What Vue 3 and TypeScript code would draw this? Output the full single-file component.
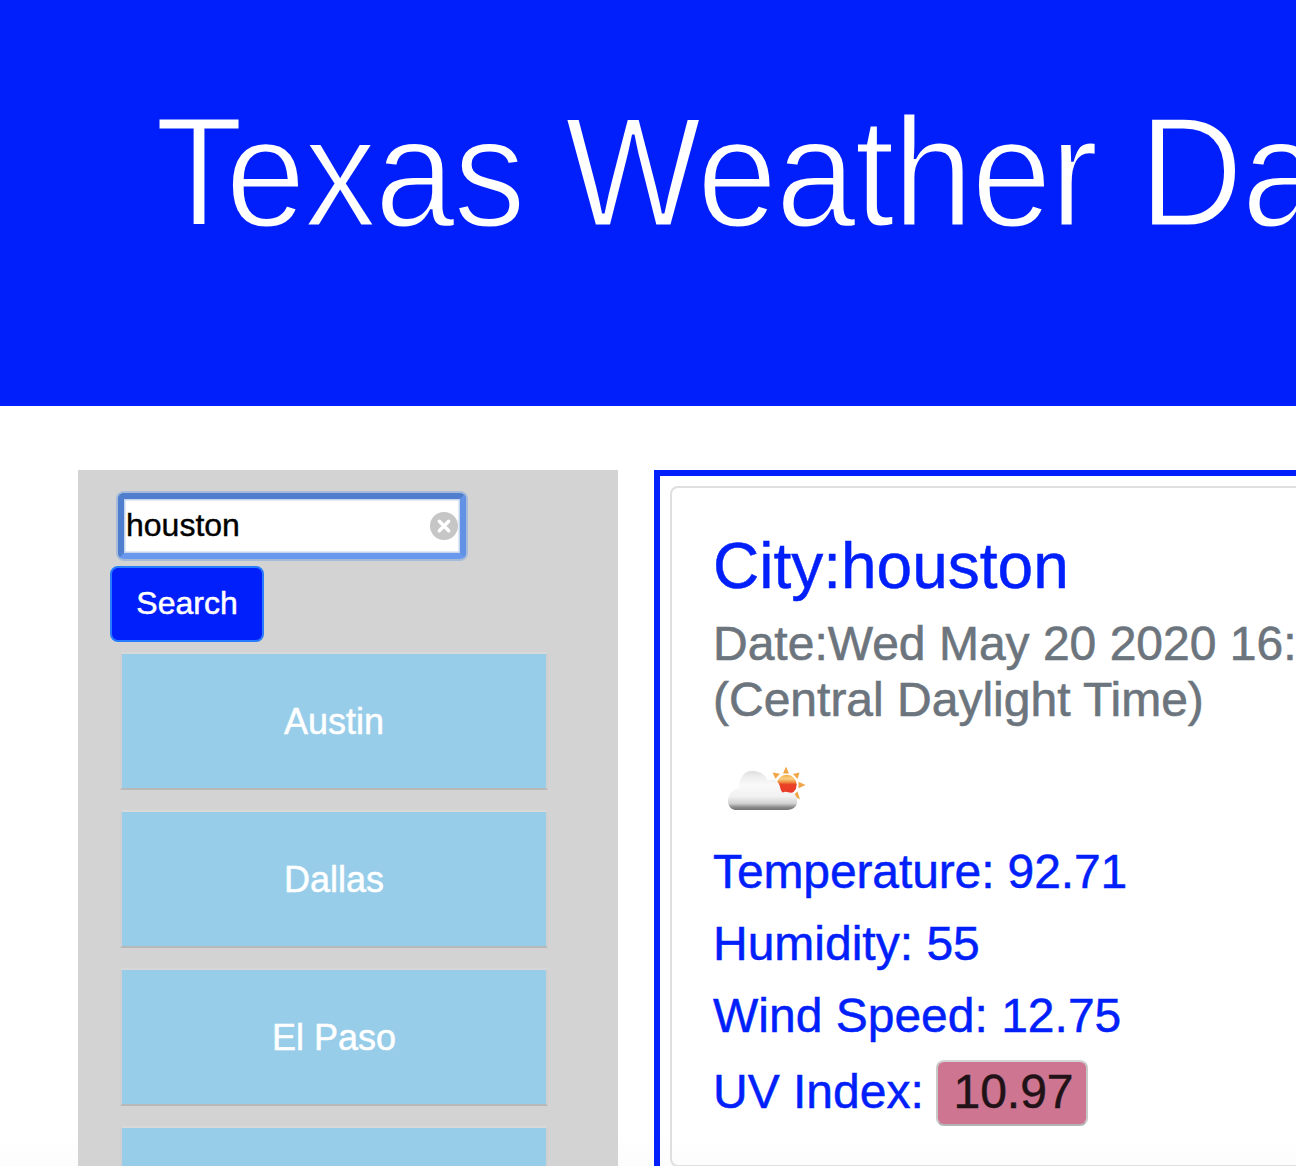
<script setup lang="ts">
import { ref } from 'vue'

const query = ref<string>('houston')
const cities: string[] = ['Austin', 'Dallas', 'El Paso', '']
const title: string[] = ['Texas', 'Weather', 'Da']
</script>

<template>
  <div class="page">
    <header class="banner">
      <h1><span v-for="(word, i) in title" :key="word" :class="'w' + i">{{ word }}</span></h1>
    </header>
    <main class="content">
      <aside class="sidebar">
        <div class="search">
          <input v-model="query" type="text" />
          <svg class="clear" viewBox="0 0 28 28" width="28" height="28">
            <circle cx="14" cy="14" r="14" fill="#c6c6c6" />
            <path d="M9.3 9.3l9.4 9.4M18.7 9.3l-9.4 9.4" stroke="#fff" stroke-width="3.4" stroke-linecap="round" />
          </svg>
        </div>
        <button class="go">Search</button>
        <button v-for="c in cities" :key="c" class="city">{{ c }}</button>
      </aside>
      <section class="panel">
        <div class="card">
          <h2>City:houston</h2>
          <h3>
            Date:Wed May 20 2020 16:<br />
            (Central Daylight Time)
          </h3>
          <svg class="weather" viewBox="0 0 100 100" width="100" height="100">
            <defs>
              <linearGradient id="cloud" x1="0" y1="0" x2="0" y2="1">
                <stop offset="0" stop-color="#dedede" />
                <stop offset=".15" stop-color="#eeeeee" />
                <stop offset=".35" stop-color="#f9f9f9" />
                <stop offset=".65" stop-color="#f2f2f2" />
                <stop offset=".83" stop-color="#d2d2d2" />
                <stop offset=".93" stop-color="#8b8b8b" />
                <stop offset="1" stop-color="#747474" />
              </linearGradient>
              <linearGradient id="sun" x1="0" y1="0" x2="0" y2="1">
                <stop offset="0" stop-color="#f6a940" />
                <stop offset=".2" stop-color="#f8d184" />
                <stop offset=".38" stop-color="#ef8a3c" />
                <stop offset=".48" stop-color="#ea4327" />
                <stop offset="1" stop-color="#e8352a" />
              </linearGradient>
              <filter id="soft" x="-10%" y="-10%" width="120%" height="120%">
                <feGaussianBlur stdDeviation=".6" />
              </filter>
            </defs>
            <g filter="url(#soft)">
              <path fill="#f0a646" d="M73 26.500l3 7h-6zM59.500 32.500l7.500 1.200-4.600 5zM86.500 32.500l-1.800 6.500-4.800-5zM92.500 45l-7 3.200v-6.400zM87 59.500l-7-4 4.500-4z" />
              <circle cx="73.700" cy="44.700" r="10" fill="url(#sun)" />
              <path fill="url(#cloud)" d="M24 70C16 70 14 63 15.500 57.500C17 52 21 49 26 48C26 38 31 31 39 31C47 31 52.500 34.500 55 41C60 38 64 40 66 44C67.500 47 67 50 69.500 52.500C74 50.500 76 53.500 79 52.500C84 54 86 63 82 67Q79 70 75 70Z" />
            </g>
          </svg>
          <p class="temp">Temperature: 92.71</p>
          <p>Humidity: 55</p>
          <p>Wind Speed: 12.75</p>
          <p class="uv"><span class="t-uv">UV Index:</span><span class="badge">10.97</span></p>
        </div>
      </section>
    </main>
  </div>
</template>

<style>
body { margin: 0; overflow: hidden; }
</style>

<style scoped>
* { box-sizing: border-box; }
.page {
  width: 1296px;
  height: 1166px;
  overflow: hidden;
  background: linear-gradient(#fff 1134px, #fcfcfc 1166px);
  font-family: "Liberation Sans", Arial, sans-serif;
}
.banner { height: 406px; background: #001ffa; overflow: hidden; }
h1 {
  display: flex;
  margin: 0;
  padding: 88px 0 0 155px;
  font-size: 156px;
  line-height: 168px;
  font-weight: 400;
  letter-spacing: -1.7px;
  color: #fff;
  white-space: nowrap;
  -webkit-text-stroke: 2.800px #001ffa;
}
h1 span { flex: none; transform: scaleX(.925); transform-origin: left; }
.w0 { width: 410px; }
.w1 { width: 574px; }
.content { display: flex; gap: 36px; padding: 64px 0 0 78px; }
.sidebar {
  display: flex;
  flex-direction: column;
  align-items: flex-start;
  flex: none;
  width: 540px;
  height: 696px;
  padding-top: 23px;
  overflow: hidden;
  background: #d3d3d3;
}
.search {
  display: flex;
  align-items: center;
  flex: none;
  width: 348px;
  height: 66px;
  margin-left: 40px;
  padding-right: 4px;
  border: 6px solid;
  border-color: #4f7ecf #6292e6 #6998ec #4f7ecf;
  border-radius: 6px;
  background: #fff;
  box-shadow: 0 0 0 2px rgba(101, 149, 230, .4), inset 0 0 0 1.500px #c6d4ee;
}
input {
  flex: 1;
  min-width: 0;
  padding: 0 0 2px 2px;
  border: 0;
  outline: 0;
  background: transparent;
  font: 32px "Liberation Sans", Arial, sans-serif;
  color: #000;
  -webkit-text-stroke: .4px #000;
}
.clear { flex: none; margin-right: -2px; }
.go {
  flex: none;
  width: 154px;
  height: 76px;
  margin: 7px 0 10px 32px;
  padding: 0 0 2px;
  border: 2px solid #267bff;
  border-radius: 8px;
  background: #001ffa;
  color: #fff;
  font: 32px "Liberation Sans", Arial, sans-serif;
  -webkit-text-stroke: .5px #fff;
}
.city {
  flex: none;
  width: 428px;
  height: 138px;
  margin: 0 0 20px 42px;
  padding: 2px 0 0;
  border: 2px solid;
  border-color: #d8d8d8 #d0d0d0 #b8b8b8 #d0d0d0;
  background: #97cde9;
  color: #fff;
  font: 36px "Liberation Sans", Arial, sans-serif;
  -webkit-text-stroke: .5px #fff;
}
.panel {
  flex: none;
  width: 900px;
  height: 760px;
  padding: 10px;
  border: 6px solid #001ffa;
}
.card {
  height: 681px;
  padding: 42px 0 0 41px;
  border: 2px solid #dfdfdf;
  border-radius: 8px;
  color: #001ffa;
  white-space: nowrap;
  -webkit-text-stroke: .5px currentColor;
}
h2 { margin: 0 0 14px; font-size: 64px; line-height: 72px; font-weight: 400; }
h3 { margin: 0; font-size: 48px; line-height: 56px; font-weight: 400; color: #6c757d; -webkit-text-stroke: .6px #6c757d; }
.weather { display: block; margin: 12px 0 -4px; }
p { margin: 0; font-size: 48px; line-height: 72px; }
.temp { letter-spacing: -.12px; }
.uv { display: flex; align-items: center; height: 76px; margin-top: 2px; }
.t-uv { width: 223px; }
.badge {
  width: 152px;
  height: 66px;
  margin-top: 2px;
  padding-left: 3px;
  border: 2px solid;
  border-color: #d4d4d4 #c8c8c8 #b4b4b4;
  border-radius: 8px;
  background: #ce7592;
  color: #211217;
  line-height: 60px;
  text-align: center;
  -webkit-text-stroke: .5px #211217;
}
</style>
